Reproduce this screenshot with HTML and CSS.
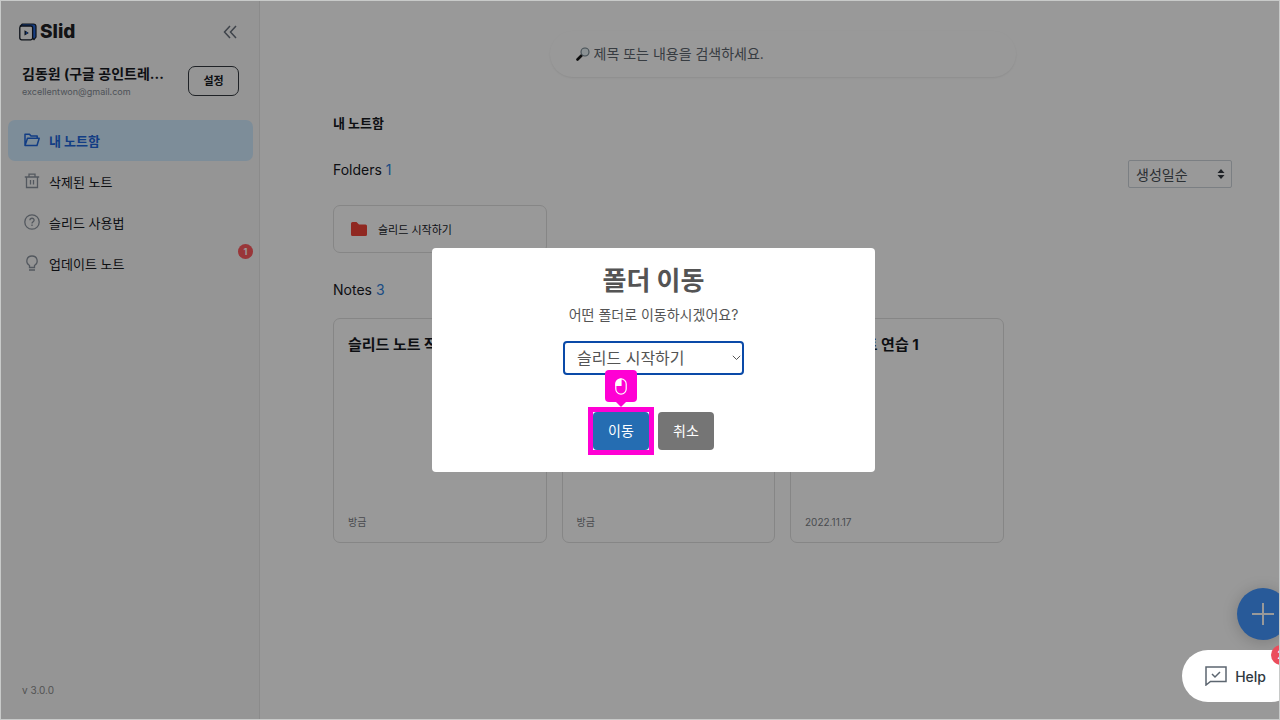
FILE: index.html
```html
<!DOCTYPE html>
<html lang="ko">
<head>
<meta charset="utf-8">
<meta name="viewport" content="width=device-width, initial-scale=1">
<title>Slid</title>
<link rel="stylesheet" href="styles.css">
</head>
<body>
<div class="frame">
<div class="app">
  <aside class="sidebar">
    <div class="brand">
      <div class="logo">
        <svg width="18" height="18" viewBox="0 0 18 18" fill="none" aria-hidden="true">
          <path d="M1.500 2.800 3.200 1h11.300a2.500 2.500 0 0 1 2.500 2.500V14l-2 2.500z" fill="#2467db" stroke="#141c28" stroke-width="1.200"/>
          <rect x=".8" y="3" width="12.800" height="13.800" rx="1.800" fill="#f8f8f8" stroke="#141c28" stroke-width="1.300"/>
          <path d="M5.500 7.300v5.200L9.800 9.900z" fill="#141c28"/><path d="M6.800 8.600v2.600l2.200-1.300z" fill="#2467db"/>
        </svg>
        <span>Slid</span>
      </div>
      <button class="collapse" type="button" aria-label="접기">
        <svg width="14" height="14" viewBox="0 0 14 14" fill="none" stroke="#68707c" stroke-width="1.500" aria-hidden="true"><path d="M7 1 1.500 7 7 13M13 1 7.500 7l5.500 6"/></svg>
      </button>
    </div>
    <div class="profile">
      <div class="who">
        <div class="name">김동원 (구글 공인트레...</div>
        <div class="email">excellentwon@gmail.com</div>
      </div>
      <button class="settings" type="button">설정</button>
    </div>
    <nav class="nav">
      <a class="nav-item active" href="#">
        <svg width="16" height="16" viewBox="0 0 16 16" fill="none" stroke="currentColor" stroke-width="1.500" stroke-linejoin="round" aria-hidden="true"><path d="M1 13.500V2.200h4.500L7 4h6.200v2.300M1 13.500 3.500 6.300h11.700L13 13.500z"/></svg>
        내 노트함</a>
      <a class="nav-item" href="#">
        <svg width="16" height="16" viewBox="0 0 16 16" fill="none" stroke="#8b939e" stroke-width="1.300" aria-hidden="true"><path d="M.8 4h14.400M5 3.800V1.200h6v2.600M2.500 4v10.500h11V4M6.500 7v4.500M9.500 7v4.500"/></svg>
        삭제된 노트</a>
      <a class="nav-item" href="#">
        <svg width="16" height="16" viewBox="0 0 16 16" fill="none" stroke="#8b939e" stroke-width="1.300" aria-hidden="true"><circle cx="8" cy="8" r="7.200"/><path d="M5.900 6.300C6 3.500 10.200 3.600 10.100 6.200 10 7.700 8 7.700 8 9.500M8 10.600v1.300"/></svg>
        슬리드 사용법</a>
      <a class="nav-item" href="#">
        <svg width="16" height="16" viewBox="0 0 16 16" fill="none" stroke="#8b939e" stroke-width="1.300" aria-hidden="true"><path d="M5.500 12.500v-2C1 7.500 2.500 1 8 1s7 6.500 2.500 9.500v2zM5 15h6"/></svg>
        업데이트 노트<span class="nav-badge">1</span></a>
    </nav>
    <div class="version">v 3.0.0</div>
  </aside>

  <main class="main">
    <label class="search">
      <svg width="14" height="14" viewBox="0 0 14 14" fill="none" aria-hidden="true"><path d="m1.500 12.500 4-4" stroke="#151515" stroke-width="2.600" stroke-linecap="round"/><circle cx="9" cy="5" r="4" fill="#e8f2f5" stroke="#71828c" stroke-width="1.100"/></svg>
      <input type="search" aria-label="검색" placeholder="제목 또는 내용을 검색하세요.">
    </label>
    <h1 class="page-title">내 노트함</h1>
    <div class="folders-head">
      <h2 class="section-title">Folders <b>1</b></h2>
      <div class="sort">
        <select aria-label="정렬"><option>생성일순</option></select>
        <svg width="8" height="10" viewBox="0 0 8 10" fill="#343a40" aria-hidden="true"><path d="M4 0 7.500 4h-7zM4 10 .5 6h7z"/></svg>
      </div>
    </div>
    <div class="grid">
      <a class="folder" href="#">
        <svg width="16" height="14" viewBox="0 0 16 14" fill="#f04438" aria-hidden="true"><path d="M1.500 0h4L8 2.500h6.500A1.500 1.500 0 0 1 16 4v8.500a1.500 1.500 0 0 1-1.500 1.500h-13A1.500 1.500 0 0 1 0 12.500v-11A1.500 1.500 0 0 1 1.500 0z"/></svg>
        슬리드 시작하기</a>
    </div>
    <h2 class="section-title notes-title">Notes <b>3</b></h2>
    <div class="grid">
      <article class="note"><h3>슬리드 노트 작성</h3><time>방금</time></article>
      <article class="note"><h3></h3><time>방금</time></article>
      <article class="note"><h3>슬리드 노트 연습 1</h3><time>2022.11.17</time></article>
    </div>
  </main>

  <button class="add" type="button" aria-label="새 노트">
    <svg width="22" height="22" viewBox="0 0 22 22" stroke="#fff" stroke-width="2" aria-hidden="true"><path d="M11 0v22M0 11h22"/></svg>
  </button>

  <div class="overlay">
    <section class="dialog" role="dialog" aria-labelledby="dialog-title">
      <h2 id="dialog-title">폴더 이동</h2>
      <label for="target">어떤 폴더로 이동하시겠어요?</label>
      <div class="target">
        <select id="target"><option>슬리드 시작하기</option></select>
        <svg width="9" height="6" viewBox="0 0 9 6" fill="none" stroke="#555" aria-hidden="true"><path d="m.8.800 3.700 3.700L8.200.8"/></svg>
      </div>
      <div class="actions">
        <div class="step">
          <button class="btn confirm" type="button">이동</button>
          <span class="pointer">
            <svg width="12" height="17" viewBox="0 0 12 17" fill="none" stroke="#fff" stroke-width="1.200" aria-hidden="true"><rect x=".8" y=".8" width="10.400" height="15.400" rx="5.200"/><path d="M6 1v6.500H1V6a5 5 0 0 1 5-5z" fill="#fff"/></svg>
          </span>
        </div>
        <button class="btn cancel" type="button">취소</button>
      </div>
    </section>
  </div>

  <button class="help" type="button">
    <svg width="22" height="20" viewBox="0 0 22 20" fill="none" stroke="#5c6670" stroke-width="1.500" aria-hidden="true"><path d="M1 1h20v14.500H5.500L1 19zM7 8l3 3 5-5"/></svg>
    Help<span class="help-badge">2</span>
  </button>
</div>
</div>
</body>
</html>
```
FILE: styles.css
```css
* { box-sizing: border-box; }
body {
  margin: 0;
  font-family: Inter, "Noto Sans CJK KR", sans-serif;
  font-size: 13px;
  color: #17191f;
}
button, input, select { font: inherit; color: inherit; margin: 0; }
button { cursor: pointer; }
h1, h2, h3 { margin: 0; }
a { color: inherit; text-decoration: none; }
svg { display: block; flex: none; }

.frame { height: 100vh; border: 1px solid #c8cac9; overflow: hidden; }
/* The workspace runs past the right edge of its frame. */
.app {
  position: relative;
  display: flex;
  width: calc(100% + 27px);
  height: 100%;
  background: #fff;
}

.sidebar {
  display: flex;
  flex-direction: column;
  flex: 0 0 259px;
  padding: 20px 6px 20px 7px;
  background: #f8f8f8;
  border-right: 1px solid #e8e8e8;
}
.brand { display: flex; align-items: center; justify-content: space-between; padding: 0 16px 0 11px; }
.logo { display: flex; align-items: center; gap: 3px; font-size: 19px; font-weight: 800; line-height: 22px; color: #202124; }
.collapse { padding: 0; border: 0; background: none; }
.profile { display: flex; align-items: center; justify-content: space-between; padding: 0 14px; margin-top: 22px; height: 32px; }
.who { width: 150px; padding-top: 2px; }
.name { font-size: 14px; font-weight: 700; line-height: 20px; white-space: nowrap; }
.email { font-size: 9px; line-height: 16px; color: #838a94; }
.settings { width: 51px; height: 30px; padding: 0 0 1px; border: 1px solid #343a40; border-radius: 7px; background: none; font-size: 11px; font-weight: 700; line-height: 16px; }
.nav { display: flex; flex-direction: column; margin-top: 23px; }
.nav-item { position: relative; display: flex; align-items: center; gap: 9px; height: 41px; padding: 0 16px 1px; border-radius: 7px; }
.active { background: #d0ebff; color: #1e66dc; font-weight: 700; }
.nav-badge { position: absolute; top: 1px; right: 0; width: 15px; height: 15px; border-radius: 50%; background: #ff5a5f; color: #fff; font-size: 9px; font-weight: 700; line-height: 15px; text-align: center; }
.version { margin-top: auto; padding: 0 14px; font-size: 10px; line-height: 18px; color: #8b8b8b; }

.main { flex: 1; min-width: 0; padding: 30px 74px 0 73px; }
.search { display: flex; align-items: center; gap: 4px; width: 466px; max-width: 100%; height: 46px; margin: 0 auto; padding: 0 26px; border-radius: 23px; box-shadow: 0 1px 2px rgba(0, 0, 0, .08); font-size: 14px; }
.search input { flex: 1; min-width: 0; padding: 0 0 1px; border: 0; outline: 0; background: none; }
.search input::placeholder { color: #5d646d; opacity: 1; }
.page-title { margin-top: 36px; font-size: 13px; font-weight: 700; line-height: 20px; }
.folders-head { display: flex; justify-content: space-between; height: 28px; margin: 27px 0 17px; }
.section-title { font-size: 14px; font-weight: 400; line-height: 20px; }
.section-title b { font-weight: 400; color: #2f80dc; }
.sort { position: relative; width: 104px; height: 28px; }
.sort select { appearance: none; width: 100%; height: 100%; padding: 0 7px; border: 1px solid #ced4da; border-radius: 2px; background: #fff; color: #495057; font-size: 14px; }
.sort svg { position: absolute; right: 7px; top: 9px; pointer-events: none; }
.grid { display: grid; grid-template-columns: repeat(4, 1fr); gap: 15px; }
.folder { display: flex; align-items: center; gap: 11px; height: 48px; padding: 0 17px; border: 1px solid #e0e0e0; border-radius: 7px; font-size: 11px; }
.notes-title { margin: 27px 0 18px; }
.note { display: flex; flex-direction: column; justify-content: space-between; height: 225px; padding: 15px 14px 12px; border: 1px solid #e0e0e0; border-radius: 7px; }
.note h3 { min-height: 22px; font-size: 15px; font-weight: 700; line-height: 22px; }
.note time { font-size: 10px; line-height: 16px; color: #7b8086; }

.add { position: absolute; right: 17px; bottom: 79px; display: grid; place-items: center; width: 52px; height: 52px; padding: 0; border: 0; border-radius: 50%; background: #4496ff; box-shadow: 0 2px 16px rgba(0, 0, 0, .2); }

.overlay { position: absolute; inset: 0; display: grid; place-items: center; background: rgba(0, 0, 0, .4); }
.dialog { display: flex; flex-direction: column; align-items: center; width: 443px; padding: 14px 20px 22px; border-radius: 4px; background: #fff; color: #545454; }
.dialog h2 { font-size: 26px; font-weight: 700; line-height: 38px; }
.dialog label { margin-top: 5px; font-size: 14px; line-height: 20px; }
.target { position: relative; width: 181px; height: 34px; margin-top: 16px; }
.target select { appearance: none; width: 100%; height: 100%; padding: 0 12px; border: 2px solid #0a4aa8; border-radius: 4px; outline: 0; background: #fff; font-size: 16px; }
.target svg { position: absolute; right: 3px; top: 14px; pointer-events: none; }
.actions { display: flex; gap: 9px; margin-top: 37px; }
.step { position: relative; outline: 5px solid #ff00d4; background: #fff; }
.btn { display: block; width: 56px; height: 38px; padding: 0 0 2px; border: 0; border-radius: 4px; color: #fff; font-size: 14px; }
.confirm { background: #256db2; }
.cancel { background: #757575; }
.pointer { position: absolute; left: 12px; bottom: 48px; display: grid; place-items: center; width: 32px; height: 32px; border-radius: 4px; background: #ff00d4; }
.pointer::after { content: ""; position: absolute; top: 100%; left: 11px; border: 5px solid transparent; border-top-color: #ff00d4; border-bottom: 0; }

.help { position: absolute; right: 9px; bottom: 17px; display: flex; align-items: center; gap: 8px; height: 52px; padding: 0 23px; border: 0; border-radius: 26px; background: #fff; color: #2f3941; font-size: 14px; font-weight: 500; }
.help-badge { position: absolute; top: -5px; right: 6px; width: 20px; height: 20px; border-radius: 50%; background: #eb4d5c; color: #fff; font-size: 12px; line-height: 20px; text-align: center; }
```
